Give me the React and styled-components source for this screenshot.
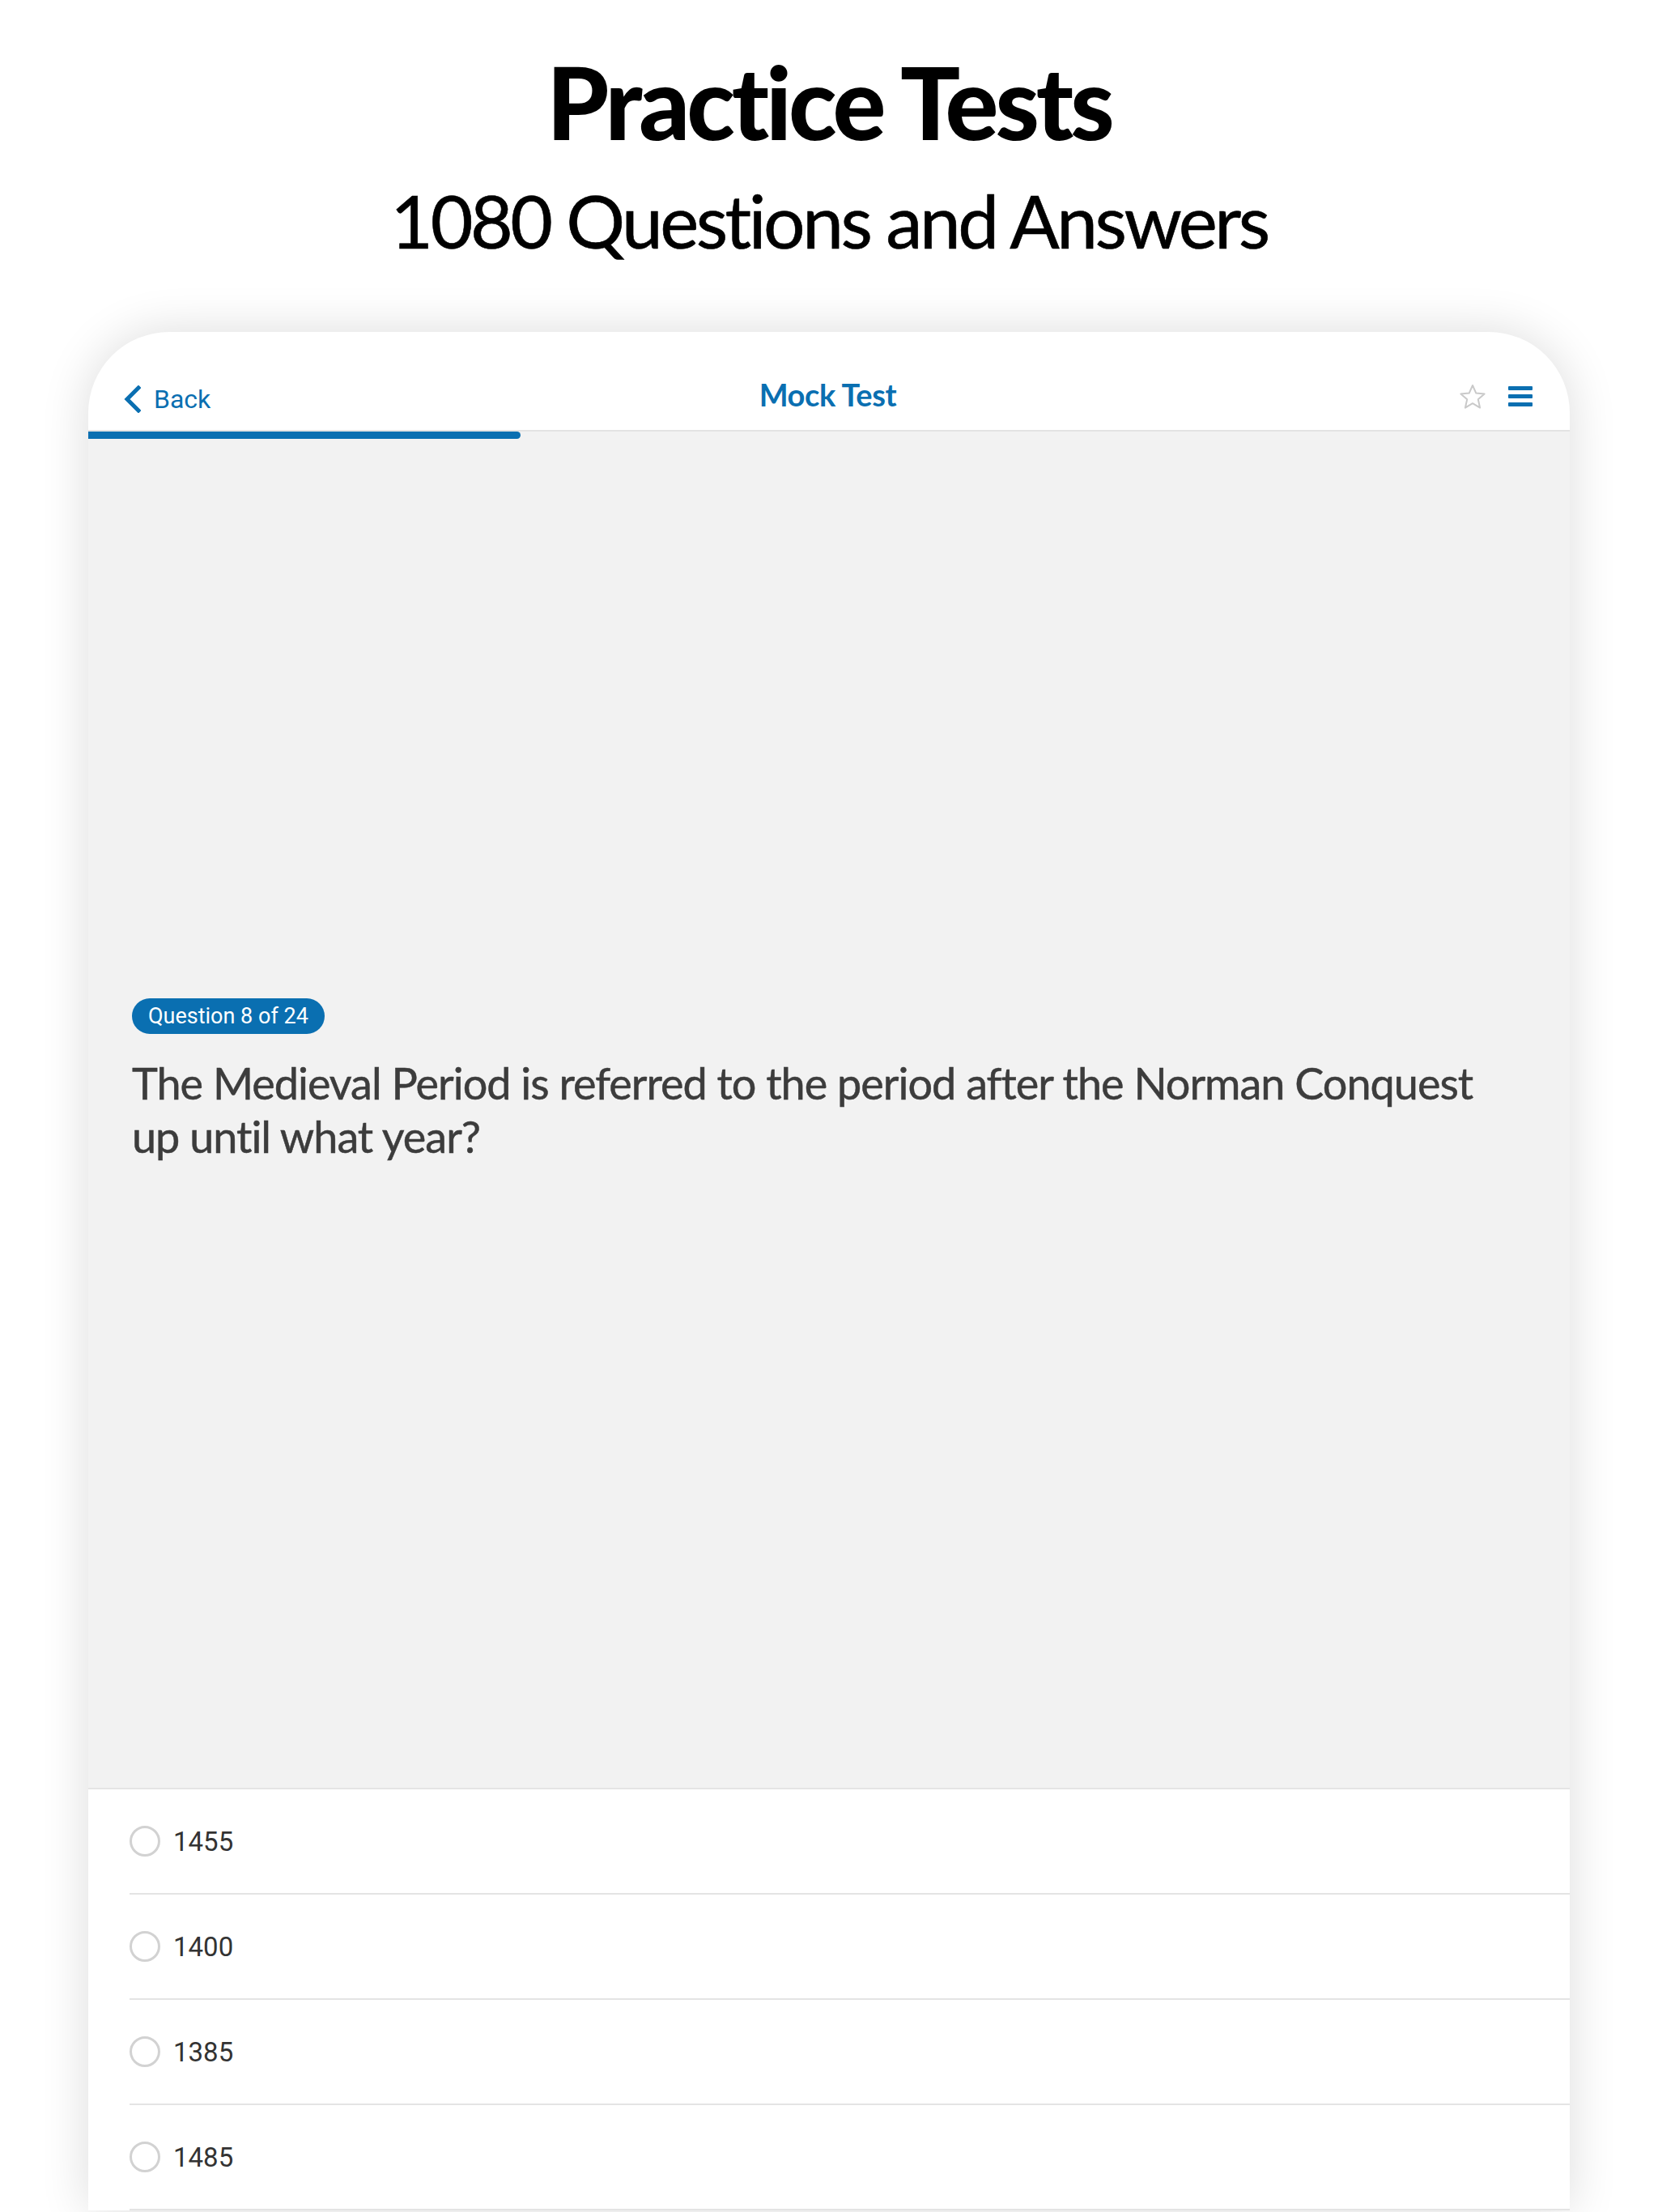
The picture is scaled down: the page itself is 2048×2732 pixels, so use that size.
import React from "react";
import styled, { createGlobalStyle } from "styled-components";

const BLUE = "#0a6fb1";

const GlobalStyle = createGlobalStyle`
  html, body {
    margin: 0;
    padding: 0;
    background: #ffffff;
  }
  body {
    font-family: "Lato", "Liberation Sans", sans-serif;
    overflow: hidden;
  }
`;

const Page = styled.div`
  width: 2048px;
  height: 2732px;
  overflow: hidden;
  display: flex;
  flex-direction: column;
  align-items: center;
`;

const Hero = styled.header`
  padding-top: 64px;
  text-align: center;
  color: #000;
`;

const Title = styled.h1`
  margin: 0;
  font-size: 123px;
  font-weight: 900;
  line-height: 1;
  letter-spacing: -4px;
`;

const Subtitle = styled.h2`
  margin: 39px 0 0;
  font-size: 91px;
  font-weight: 400;
  line-height: 1;
  letter-spacing: -3.5px;
  -webkit-text-stroke: 0.6px #000;
`;

const Device = styled.section`
  margin-top: 93px;
  width: 1830px;
  flex-shrink: 0;
  background: #fff;
  border-radius: 100px 100px 0 0;
  box-shadow: 0 0 60px rgba(0, 0, 0, 0.14);
  overflow: hidden;
  display: flex;
  flex-direction: column;
`;

const NavBar = styled.nav`
  height: 123px;
  box-sizing: border-box;
  padding: 38px 46px 0 43px;
  display: grid;
  grid-template-columns: 1fr auto 1fr;
  align-items: center;
  border-bottom: 2px solid #e3e3e3;
`;

const BackButton = styled.button`
  justify-self: start;
  display: flex;
  align-items: center;
  gap: 16px;
  padding: 0;
  border: none;
  background: none;
  color: ${BLUE};
  font-family: Roboto, "Liberation Sans", sans-serif;
  font-size: 32px;
  font-weight: 400;
  margin-top: 6px;
`;

const NavTitle = styled.div`
  color: ${BLUE};
  font-size: 38px;
  font-weight: 700;
  letter-spacing: -0.4px;
  margin-top: -6px;
`;

const NavActions = styled.div`
  justify-self: end;
  display: flex;
  align-items: center;
  gap: 27px;
`;

const ProgressTrack = styled.div`
  height: 9px;
  background: #f2f2f2;
`;

const ProgressFill = styled.div`
  height: 100%;
  background: ${BLUE};
  border-radius: 0 5px 5px 0;
`;

const Stage = styled.div`
  height: 1666px;
  box-sizing: border-box;
  background: #f2f2f2;
  display: flex;
  flex-direction: column;
  justify-content: center;
  padding: 0 100px 81px 54px;
`;

const Badge = styled.span`
  align-self: flex-start;
  height: 44px;
  display: inline-flex;
  align-items: center;
  padding: 0 20px 0 20px;
  border-radius: 22px;
  background: ${BLUE};
  color: #fff;
  font-family: Roboto, "Liberation Sans", sans-serif;
  font-size: 27px;
`;

const Question = styled.p`
  margin: 28px 0 0;
  color: #3c3c3c;
  font-size: 54px;
  line-height: 66px;
  font-weight: 400;
  letter-spacing: -1px;
  -webkit-text-stroke: 0.5px #3c3c3c;
`;

const AnswerList = styled.ul`
  margin: 0;
  padding: 0;
  list-style: none;
  background: #fff;
  border-top: 2px solid #e4e4e4;
`;

const AnswerRow = styled.li`
  height: 128px;
  margin-left: 51px;
  display: flex;
  align-items: center;
  border-bottom: 2px solid #e4e4e4;
`;

const Radio = styled.span`
  width: 38px;
  height: 38px;
  box-sizing: border-box;
  border: 3px solid #d2d2d2;
  border-radius: 50%;
  flex-shrink: 0;
`;

const AnswerText = styled.span`
  margin-left: 16px;
  color: #333;
  font-family: Roboto, "Liberation Sans", sans-serif;
  font-size: 33px;
`;

const Chevron = () => (
  <svg width="22" height="34" viewBox="0 0 22 34">
    <path d="M19 3 L5 17 L19 31" fill="none" stroke={BLUE} strokeWidth="5" strokeLinecap="square" />
  </svg>
);

const StarIcon = () => (
  <svg width="34" height="32" viewBox="0 0 34 32">
    <polygon
      points="17,2 21.3,11.6 31.6,12.5 23.8,19.3 26.1,29.6 17,24.2 7.9,29.6 10.2,19.3 2.4,12.5 12.7,11.6"
      fill="none"
      stroke="#c9c9c9"
      strokeWidth="2"
      strokeLinejoin="round"
    />
  </svg>
);

const MenuIcon = () => (
  <svg width="30" height="25" viewBox="0 0 30 25">
    <rect x="0" y="0" width="30" height="5" rx="1" fill={BLUE} />
    <rect x="0" y="10" width="30" height="5" rx="1" fill={BLUE} />
    <rect x="0" y="20" width="30" height="5" rx="1" fill={BLUE} />
  </svg>
);

const answers = ["1455", "1400", "1385", "1485"];
const current = 7;
const total = 24;

const App = () => {
  return (
    <Page>
      <GlobalStyle />
      <Hero>
        <Title>Practice Tests</Title>
        <Subtitle>1080 Questions and Answers</Subtitle>
      </Hero>
      <Device>
        <NavBar>
          <BackButton>
            <Chevron />
            Back
          </BackButton>
          <NavTitle>Mock Test</NavTitle>
          <NavActions>
            <StarIcon />
            <MenuIcon />
          </NavActions>
        </NavBar>
        <ProgressTrack>
          <ProgressFill style={{ width: `${(current / total) * 100}%` }} />
        </ProgressTrack>
        <Stage>
          <Badge>Question 8 of 24</Badge>
          <Question>
            The Medieval Period is referred to the period after the Norman Conquest up until what year?
          </Question>
        </Stage>
        <AnswerList>
          {answers.map((a) => (
            <AnswerRow key={a}>
              <Radio />
              <AnswerText>{a}</AnswerText>
            </AnswerRow>
          ))}
        </AnswerList>
      </Device>
    </Page>
  );
};

export default App;
